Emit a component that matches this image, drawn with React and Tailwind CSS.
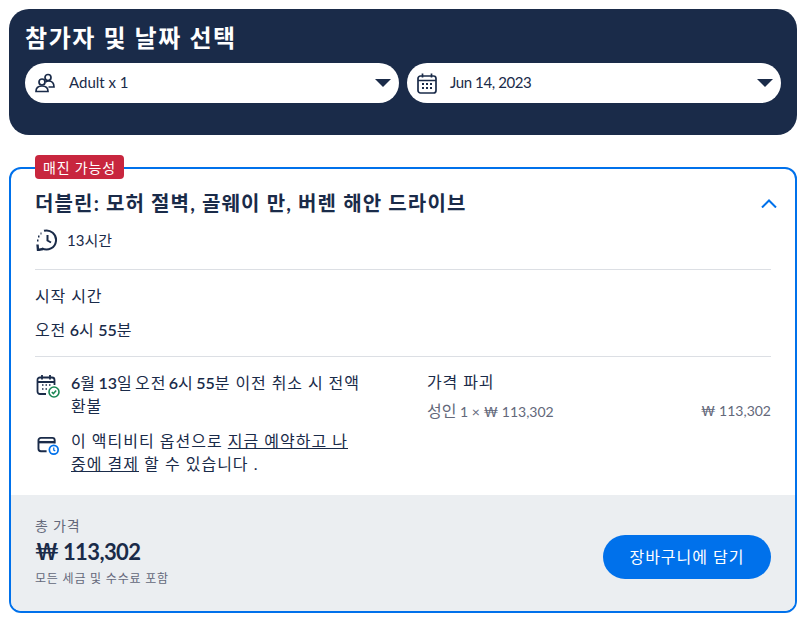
import React from 'react';

const font = "font-['Lato','Noto_Sans_CJK_KR',sans-serif]";

function PeopleIcon() {
  return (
    <svg width="20" height="20" viewBox="0 0 20 20" fill="none" stroke="#1a2b49" strokeWidth="1.7">
      <circle cx="7" cy="9" r="3" />
      <circle cx="13" cy="4.500" r="3" />
      <path d="M1 18.500c0-3.500 2.500-5.500 6-5.500s6 2 6 5.500z" />
      <path d="M10.500 9c1-.8 1.800-1 3-1 3.500 0 5.500 2 5.500 6h-5.500" />
    </svg>
  );
}

function CalendarIcon() {
  return (
    <svg width="20" height="21" viewBox="0 0 20 21" fill="none" stroke="#1a2b49" strokeWidth="1.7">
      <rect x="1" y="3" width="18" height="17" rx="2.500" />
      <path d="M1 7.500h18M5.500 0.500v4M14.500 0.500v4" />
      <path d="M5 11h2M9 11h2M13 11h2M5 15h2M9 15h2M13 15h2" strokeWidth="1.800" />
    </svg>
  );
}

function Caret() {
  return (
    <svg width="16" height="8" viewBox="0 0 16 8" className="shrink-0">
      <path d="M0 0h16L8 8z" fill="#1a2b49" />
    </svg>
  );
}

function ClockIcon() {
  return (
    <svg width="22" height="22" viewBox="0 0 22 22" fill="none" stroke="#1a2b49" strokeWidth="2">
      <path d="M8 1.800A9.500 9.500 0 1 1 6 19.300" />
      <path d="M11.500 6v5.500l3.500 2" />
      <path d="M1.500 15.500l.5 5.500 5-1" strokeWidth="2.400" />
      <path d="M1 11.500h1.500M2 7.500h1.500M4.500 4.500h1" strokeWidth="2" />
    </svg>
  );
}

function CalendarCheckIcon() {
  return (
    <svg width="24" height="24" viewBox="0 0 24 24" fill="none">
      <path d="M10 20H4a2.500 2.500 0 0 1-2.500-2.500V6A2.500 2.500 0 0 1 4 3.500h12A2.500 2.500 0 0 1 18.500 6v5" stroke="#1a2b49" strokeWidth="1.800" />
      <path d="M2 8h16M6 1v4.500M14 1v4.500" stroke="#1a2b49" strokeWidth="1.800" />
      <path d="M6 11h1.500M9.500 11H11M13 11h1.500M6 15h1.500M9.500 15H11" stroke="#1a2b49" strokeWidth="1.600" />
      <circle cx="18" cy="18" r="5" fill="#fff" stroke="#1a8754" strokeWidth="1.600" />
      <path d="M15.800 18l1.600 1.600 2.800-3" stroke="#1a8754" strokeWidth="1.500" />
    </svg>
  );
}

function PayLaterIcon() {
  return (
    <svg width="23" height="21" viewBox="0 0 24 22" fill="none">
      <path d="M10 17H4a2.500 2.500 0 0 1-2.500-2.500v-9A2.500 2.500 0 0 1 4 3h12a2.500 2.500 0 0 1 2.500 2.500V9" stroke="#1a2b49" strokeWidth="2" />
      <path d="M2 7.500h16" stroke="#1a2b49" strokeWidth="2.500" />
      <circle cx="17.500" cy="15.500" r="5.500" fill="#0071eb" />
      <circle cx="17.500" cy="15.500" r="3.700" fill="#fff" />
      <path d="M17.500 13v2.800l1.600 1" stroke="#0071eb" strokeWidth="1.300" />
    </svg>
  );
}

export default function App() {
  return (
    <div className={`${font} bg-white min-h-[630px] pl-[9px] pr-[14px] pt-[9px] text-[#1a2b49]`}>
      <section className="h-[126px] rounded-[20px] bg-[#1a2b49] px-4 pt-[13px]">
        <h2 className="text-[24px] leading-[32px] font-bold tracking-[1.6px] text-white">참가자 및 날짜 선택</h2>
        <div className="mt-[9px] grid grid-cols-2 gap-2">
          <div className="flex h-10 items-center rounded-full bg-white pl-[10px] pr-[8px]">
            <PeopleIcon />
            <span className="ml-[14px] flex-1 pb-[2px] text-[15px]">Adult x 1</span>
            <Caret />
          </div>
          <div className="flex h-10 items-center rounded-full bg-white pl-[10px] pr-[8px]">
            <CalendarIcon />
            <span className="ml-[13px] flex-1 pb-[2px] text-[15px] tracking-[-0.4px]">Jun 14, 2023</span>
            <Caret />
          </div>
        </div>
      </section>

      <section className="relative mt-8 h-[446px] rounded-xl border-2 border-[#0071eb]">
        <span className="absolute left-6 top-[-14px] flex h-6 w-[89px] items-center justify-center rounded bg-[#c8263e] text-[14px] tracking-[0.8px] text-white">
          매진 가능성
        </span>
        <div className="h-[326px] px-6">
          <div className="flex items-center justify-between pt-[20px]">
            <h3 className="text-[20px] leading-[28px] font-bold tracking-[1.15px]">더블린: 모허 절벽, 골웨이 만, 버렌 해안 드라이브</h3>
            <svg width="16" height="9" viewBox="0 0 16 9" fill="none" stroke="#0071eb" strokeWidth="2" className="-mr-[6px]">
              <path d="M1 8.500L8 1.500 15 8.500" />
            </svg>
          </div>
          <div className="mt-3 flex items-center gap-[9px] pl-[1px] text-[15px]">
            <ClockIcon />
            <span>13시간</span>
          </div>
          <hr className="mt-[17px] border-[#dcdfe4]" />
          <p className="mt-[15px] text-[16px] leading-[22px] tracking-[0.9px]">시작 시간</p>
          <p className="mt-3 text-[16px] leading-[22px] tracking-[0.9px] [word-spacing:-1.5px]">
            오전 <b className="font-semibold tracking-normal">6</b>시 <b className="font-semibold tracking-normal">55</b>분
          </p>
          <hr className="mt-[15px] border-[#dcdfe4]" />
          <div className="mt-[14px] flex">
            <div className="w-[392px]">
              <div className="flex gap-[12px]">
                <div className="ml-[1px] -mr-[1px] w-6 shrink-0 pt-[3px]"><CalendarCheckIcon /></div>
                <p className="w-[292px] text-[16px] leading-[23px] tracking-[0.9px]">
                  <span className="[word-spacing:-2.5px]">
                    <b className="font-semibold tracking-normal">6</b>월 <b className="font-semibold tracking-normal">13</b>일 오전 <b className="font-semibold tracking-normal">6</b>시 <b className="font-semibold tracking-normal">55</b>분
                  </span>{' '}
                  이전 취소 시 전액 환불
                </p>
              </div>
              <div className="mt-[12px] flex gap-[12px]">
                <div className="ml-[2px] -mr-[2px] w-6 shrink-0 pt-[6px]"><PayLaterIcon /></div>
                <p className="w-[292px] text-[16px] leading-[23px] tracking-[1px]">
                  이 액티비티 옵션으로 <span className="underline">지금 예약하고 나중에 결제</span> 할 수 있습니다 .
                </p>
              </div>
            </div>
            <div className="flex-1">
              <p className="text-[16px] leading-[22px] tracking-[0.9px]">가격 파괴</p>
              <div className="mt-[7px] flex justify-between text-[14px] leading-[22px] text-[#63687a]">
                <span><span className="text-[16px]">성인</span> 1 × ₩ 113,302</span>
                <span>₩ 113,302</span>
              </div>
            </div>
          </div>
        </div>
        <div className="flex h-[116px] items-center justify-between rounded-b-[10px] bg-[#ebeef1] px-6">
          <div>
            <p className="mb-[1px] text-[14px] leading-[18px] tracking-[0.8px] text-[#63687a]">총 가격</p>
            <p className="text-[22px] leading-[32px] font-bold tracking-[-0.6px]">₩ 113,302</p>
            <p className="mt-[1px] text-[12px] leading-[20px] tracking-[0.8px] text-[#63687a]">모든 세금 및 수수료 포함</p>
          </div>
          <button className="mt-2 h-11 w-[168px] rounded-full bg-[#0071eb] text-[16px] tracking-[1px] text-white">장바구니에 담기</button>
        </div>
      </section>
    </div>
  );
}
